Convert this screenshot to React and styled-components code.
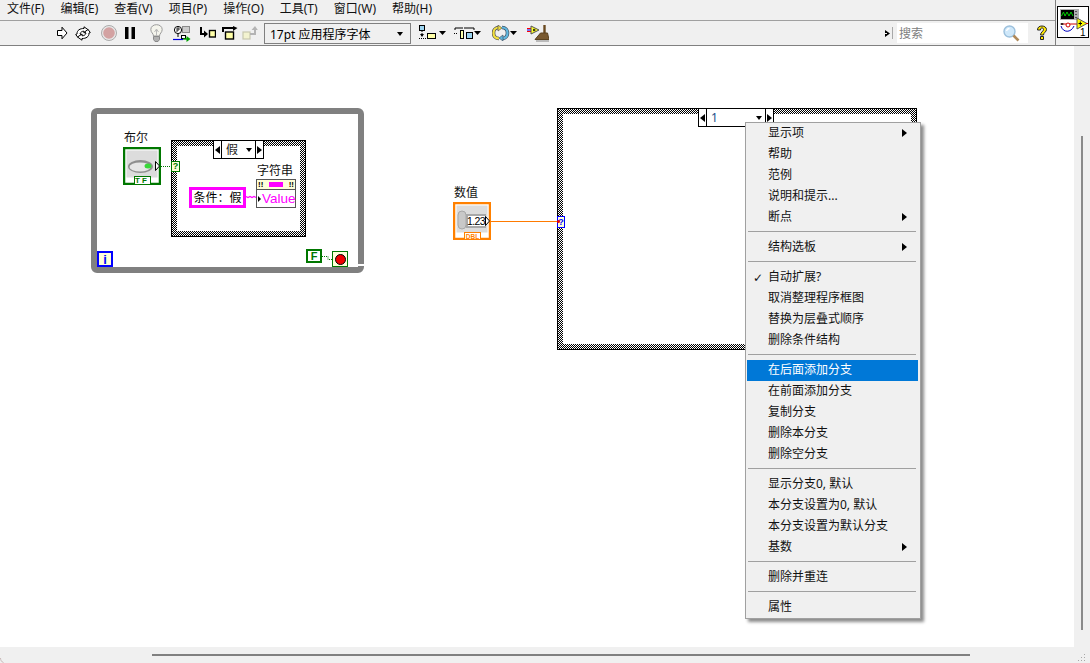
import React from "react";
import styled, { createGlobalStyle, css } from "styled-components";

const FONT = `"Noto Sans", "Noto Sans CJK SC", sans-serif`;

const Global = createGlobalStyle`
  html, body { margin: 0; padding: 0; background: #f0f0f0; }
  body { font-family: ${FONT}; font-size: 12px; color: #000; }
`;

/* ---------- window frame ---------- */
const Page = styled.div`
  position: relative; width: 1090px; height: 663px; display: flex; flex-direction: column; overflow: hidden; background: #f0f0f0;
`;
const TopBar = styled.header`
  display: flex; height: 46px; box-sizing: border-box; border-bottom: 1px solid #808080; flex: none;
`;
const TopLeft = styled.div`
  flex: 1; display: flex; flex-direction: column; min-width: 0;
`;
const MenuBar = styled.nav`
  height: 21px; box-sizing: border-box; border-bottom: 1px solid #a0a0a0; display: flex; align-items: center; line-height: 18px; padding: 0 0 2px; margin-left: -1px;
`;
const MenuTitle = styled.span`
  padding: 0 8px; white-space: nowrap; color: #111;
`;
const Toolbar = styled.div`
  flex: 1; display: flex; align-items: center; padding-left: 56px; padding-right: 7px;
`;
const Tool = styled.span`
  display: flex; flex: none; margin-left: ${p => p.$gap || 0}px;
`;
const FontSelect = styled.div`
  width: 147px; height: 21px; box-sizing: border-box; margin-left: 6px; margin-top: 1px; border: 1px solid #808080; display: flex; align-items: center; padding: 0 7px 0 5px; justify-content: space-between; white-space: nowrap; flex: none;
`;
const DownTriangle = styled.span`
  width: 0; height: 0; border-left: 3.5px solid transparent; border-right: 3.5px solid transparent; border-top: 4px solid #000; flex: none;
`;
const SearchExpand = styled.span`
  margin-left: auto; display: flex; align-items: center; gap: 2px; margin-right: 4px;
`;
const SearchSep = styled.span`
  width: 1px; height: 12px; background: #a8a8a8;
`;
const SearchField = styled.div`
  width: 131px; height: 20px; background: #fff; display: flex; align-items: center; justify-content: space-between; padding: 0 8px 0 2px; box-sizing: border-box; color: #808080; flex: none;
`;
const IconPane = styled.div`
  width: 35px; flex: none; border-left: 1px solid #808080; box-sizing: border-box; padding: 6px 0 0 1px;
`;
const Main = styled.main`
  flex: 1; display: flex; min-height: 0;
`;
const Canvas = styled.div`
  flex: 1; position: relative; background: #fff;
`;
const VGutter = styled.div`
  width: 16px; flex: none; background: #f0f0f0; padding: 90px 0 17px 7px; box-sizing: border-box;
`;
const VThumb = styled.div`
  width: 2px; height: 100%; background: #8a8a8a;
`;
const BottomBar = styled.footer`
  height: 16px; flex: none; display: flex; background: #f0f0f0; padding: 7px 4px 0 152px; box-sizing: border-box; justify-content: space-between; align-items: flex-start;
`;
const HThumb = styled.div`
  width: 818px; height: 2px; background: #808080;
`;
const CornerMark = styled.svg`
  position: absolute; left: 0; bottom: 0; display: block;
`;

/* ---------- diagram nodes (free canvas) ---------- */
const at = css`
  position: absolute; left: ${p => p.$x}px; top: ${p => p.$y - 46}px;
`;
const Label = styled.span`
  ${at}; line-height: 14px; color: #111; white-space: nowrap;
`;
const WhileLoop = styled.div`
  ${at}; width: 273px; height: 165px; box-sizing: border-box; border: 6px solid #808080; border-radius: 6px;
`;
const LoopNotch = styled.div`
  ${at}; width: 7px; height: 2px; background: #fff;
`;
const CaseFrame = styled.div`
  ${at}; width: ${p => p.$w}px; height: ${p => p.$h}px; box-sizing: border-box; border: 1px solid #000; padding: 5px;
  display: flex; background: #fff;
`;
const CheckerFill = styled.svg`
  position: absolute; inset: 0; width: 100%; height: 100%; display: block; shape-rendering: crispEdges;
`;
const CaseBody = styled.div`
  flex: 1; background: #fff; position: relative;
`;
const CaseStructure = ({ x, y, w, h }) => (
  <CaseFrame $x={x} $y={y} $w={w} $h={h}>
    <CheckerFill>
      <defs>
        <pattern id="case-checker" width="2" height="2" patternUnits="userSpaceOnUse">
          <rect width="1" height="1" fill="#000" />
          <rect x="1" y="1" width="1" height="1" fill="#000" />
        </pattern>
      </defs>
      <rect width="100%" height="100%" fill="url(#case-checker)" />
    </CheckerFill>
    <CaseBody />
  </CaseFrame>
);
const Selector = styled.div`
  ${at}; height: 19px; width: ${p => p.$w}px; box-sizing: border-box; border: 1px solid #000; background: #fff; display: flex; align-items: stretch; line-height: 16px;
`;
const SelectorStep = styled.span`
  width: 7px; flex: none; display: flex; align-items: center; justify-content: center;
  ${p => p.$left ? "border-right: 1px solid #000;" : "border-left: 1px solid #000;"}
`;
const StepArrow = styled.span`
  width: 0; height: 0; border-top: 4px solid transparent; border-bottom: 4px solid transparent;
  ${p => p.$left ? "border-right: 5px solid #000;" : "border-left: 5px solid #000;"}
`;
const SelectorValue = styled.span`
  flex: 1; display: flex; align-items: center; justify-content: space-between; padding: 0 3px 0 4px; color: ${p => p.$blue ? "#1c4f8a" : "#222"};
`;
const Terminal = styled.div`
  ${at}; width: ${p => p.$w}px; height: ${p => p.$h}px; box-sizing: border-box; border: ${p => p.$bw || 1}px solid ${p => p.$c}; background: ${p => p.$bg || "#ffffd8"};
  display: flex; align-items: center; justify-content: center; color: ${p => p.$c}; font: bold ${p => p.$fs || 10}px/1 "Liberation Sans", sans-serif;
`;
const StopDot = styled.span`
  width: 11px; height: 11px; border-radius: 50%; background: #f00000; border: 1px solid #000; box-sizing: border-box;
`;
const TunnelDot = styled.span`
  ${at}; width: 3px; height: 3px; background: #f00000; border-radius: 50%;
`;
const StringConst = styled.div`
  ${at}; width: 57px; height: 21px; box-sizing: border-box; border: 3px solid #ff00ff; background: #fff; display: flex; align-items: center; justify-content: center; white-space: nowrap; line-height: 15px;
`;
const StringInd = styled.div`
  ${at}; width: 40px; height: 29px; box-sizing: border-box; border: 1px solid #555; background: #fff; display: flex; flex-direction: column;
`;
const StrHead = styled.div`
  height: 9px; background: #ffffd8; border-bottom: 1px solid #555; display: flex; align-items: center; justify-content: space-between; padding: 0 1px; font: bold 8px/8px "Liberation Sans", sans-serif; color: #000;
`;
const StrBar = styled.span`
  width: 14px; height: 5px; background: #ff00ff;
`;
const StrValue = styled.div`
  flex: 1; display: flex; align-items: center; gap: 1px; padding-left: 1px; color: #ff00ff; font: 13.5px/17px "Liberation Sans", sans-serif;
`;
const InTriangle = styled.span`
  width: 0; height: 0; border-top: 3.5px solid transparent; border-bottom: 3.5px solid transparent; border-left: 3px solid #000; flex: none;
`;
const Wire = styled.svg`
  ${at}; overflow: visible;
`;
const NodeIcon = styled.svg`
  ${at}; display: block;
`;

/* ---------- context menu ---------- */
const ContextMenu = styled.div`
  ${at}; width: 176px; box-sizing: border-box; background: #f0f0f0; border: 1px solid #a0a0a0; padding: 0 2px 0 1px; box-shadow: 3px 3px 3px rgba(0,0,0,.45); z-index: 5;
`;
const Item = styled.div`
  height: 21px; box-sizing: border-box; line-height: 19px; display: flex; align-items: center; position: relative; padding: 0 11px 2px 21px; white-space: nowrap;
  background: ${p => p.$active ? "#0078d7" : "transparent"}; color: ${p => p.$active ? "#fff" : "#111"};
`;
const Check = styled.span`
  position: absolute; left: 6px; top: 1px; font: 12px/20px "DejaVu Sans", sans-serif;
`;
const SubArrow = styled.span`
  margin-left: auto; width: 0; height: 0; border-top: 4.5px solid transparent; border-bottom: 4.5px solid transparent; border-left: 5px solid #000;
`;
const Sep = styled.div`
  height: 1px; margin: 3px 2px 5px 1px; background: #a0a0a0;
`;

const menu = [
  { t: "显示项", sub: 1 }, { t: "帮助" }, { t: "范例" }, { t: "说明和提示..." }, { t: "断点", sub: 1 }, "-",
  { t: "结构选板", sub: 1 }, "-",
  { t: "自动扩展?", check: 1 }, { t: "取消整理程序框图" }, { t: "替换为层叠式顺序" }, { t: "删除条件结构" }, "-",
  { t: "在后面添加分支", active: 1 }, { t: "在前面添加分支" }, { t: "复制分支" }, { t: "删除本分支" }, { t: "删除空分支" }, "-",
  { t: "显示分支0, 默认" }, { t: "本分支设置为0, 默认" }, { t: "本分支设置为默认分支" }, { t: "基数", sub: 1 }, "-",
  { t: "删除并重连" }, "-",
  { t: "属性" },
];
const titles = ["文件(F)", "编辑(E)", "查看(V)", "项目(P)", "操作(O)", "工具(T)", "窗口(W)", "帮助(H)"];

/* ---------- toolbar icons ---------- */
const RunIcon = () => (
  <svg width="12" height="14" viewBox="0 0 12 14">
    <path d="M1.5 4.5H6V1.2L11 7 6 12.8V9.5H1.5Z" fill="#fff" stroke="#000" />
  </svg>
);
const RunContIcon = () => (
  <svg width="16" height="15" viewBox="0 0 16 15">
    <path d="M2 8C2 4 5 2.5 9 2.5V.8L13.5 4 9 7V5.2C7 5.2 5.5 6 5 8L6.5 9 3 11.5 .7 8.5Z" fill="#fff" stroke="#000" strokeWidth="1" />
    <path d="M14 7C14 11 11 12.5 7 12.5V14.2L2.5 11 7 8V9.8C9 9.8 10.5 9 11 7L9.5 6 13 3.5 15.3 6.5Z" fill="#fff" stroke="#000" strokeWidth="1" />
  </svg>
);
const StopIcon = () => (
  <svg width="16" height="16" viewBox="0 0 16 16">
    <circle cx="8" cy="8" r="7.5" fill="#e8e8e8" stroke="#aaa" />
    <circle cx="8" cy="8" r="5.8" fill="#d3a2a2" />
  </svg>
);
const PauseIcon = () => (
  <svg width="10" height="12" viewBox="0 0 10 12">
    <path d="M0 0H3.5V12H0ZM6.5 0H10V12H6.5Z" fill="#000" />
  </svg>
);
const BulbIcon = () => (
  <svg width="13" height="18" viewBox="0 0 13 18">
    <path d="M3.5 12C3.5 9.5 .8 8.5 .8 5.5 .8 2.5 3.5.7 6.5.7S12.2 2.5 12.2 5.5C12.2 8.5 9.5 9.5 9.5 12Z" fill="#f4f4ec" stroke="#9a9a9a" />
    <path d="M4.5 8 6.5 5 8.5 8M6.5 5V12" fill="none" stroke="#bbb" />
    <path d="M3.5 12.5H9.5V15.5L8 17.5H5L3.5 15.5Z" fill="#b0b0b0" stroke="#8a8a8a" />
  </svg>
);
const ProbeIcon = () => (
  <svg width="18" height="17" viewBox="0 0 18 17">
    <circle cx="5" cy="5" r="3.6" fill="#fff" stroke="#000" />
    <path d="M4 3V7M4 3H6V5H4" fill="none" stroke="#000" strokeWidth=".8" />
    <path d="M5 9V12" stroke="#000" />
    <rect x="9.5" y="1.5" width="7" height="6" fill="#ccc" stroke="#8a8a8a" />
    <rect x="8.5" y="10.5" width="4" height="3" fill="#fff" stroke="#000" />
    <path d="M0 14.5H10" stroke="#0000e0" strokeWidth="1.2" />
    <path d="M10 14H14" stroke="#00a000" strokeWidth="1.4" />
    <path d="M13.5 11V17L17.5 14Z" fill="#00a000" />
  </svg>
);
const StepIntoIcon = () => (
  <svg width="16" height="13" viewBox="0 0 16 13">
    <path d="M1 0V7H5" fill="none" stroke="#000" strokeWidth="2" />
    <path d="M4 3.5V10.5L8 7Z" fill="#000" />
    <rect x="9.5" y="3.5" width="6" height="6.5" fill="#ffffa8" stroke="#000" strokeWidth="1.4" />
  </svg>
);
const StepOverIcon = () => (
  <svg width="16" height="14" viewBox="0 0 16 14">
    <path d="M1 6V2H11" fill="none" stroke="#000" strokeWidth="2" />
    <path d="M11 0V5L15.5 2Z" fill="#000" />
    <rect x="3.5" y="6" width="8" height="7" fill="#ffffa8" stroke="#000" strokeWidth="1.4" />
  </svg>
);
const StepOutIcon = () => (
  <svg width="16" height="14" viewBox="0 0 16 14">
    <rect x="1" y="6" width="7" height="7" fill="#f3f3d0" stroke="#c8c8b0" strokeWidth="1.2" />
    <path d="M8 8H13V3" fill="none" stroke="#b4b4b4" strokeWidth="2" />
    <path d="M9.5 4H15.8L13 0Z" fill="#b4b4b4" />
  </svg>
);
const AlignIcon = () => (
  <svg width="27" height="16" viewBox="0 0 27 16">
    <rect x=".5" y=".5" width="5" height="5" fill="#9cd4f0" stroke="#000" />
    <path d="M3 6V12" stroke="#000" strokeDasharray="1 1" />
    <path d="M1 9 3 12 5 9Z" fill="#000" />
    <path d="M0 13.5H17" stroke="#000" strokeDasharray="1 1" />
    <rect x="8.5" y="8.5" width="8" height="5" fill="#ffffa8" stroke="#000" />
    <path d="M20 6H27L23.500 10Z" fill="#000" />
  </svg>
);
const DistributeIcon = () => (
  <svg width="27" height="14" viewBox="0 0 27 14">
    <path d="M1 4V2H9M10 2H20V4" fill="none" stroke="#000" />
    <rect x="6.500" y="4.500" width="3" height="8" fill="#ffffa8" stroke="#000" />
    <rect x="12.500" y="6.500" width="6" height="6" fill="#9cd4f0" stroke="#000" />
    <path d="M0 7.500H4" stroke="#000" strokeDasharray="1 1" />
    <path d="M20 5H27L23.500 9Z" fill="#000" />
  </svg>
);
const ReorderIcon = () => (
  <svg width="25" height="16" viewBox="0 0 25 16">
    <path d="M7 2.500C3.500 2.500 1.500 5 1.500 8S3.500 13.500 7 13.500" fill="none" stroke="#555" strokeWidth="3.600" />
    <path d="M7 2.500C3.500 2.500 1.500 5 1.500 8S3.500 13.500 7 13.500" fill="none" stroke="#f2e040" strokeWidth="2.200" />
    <path d="M6 0 10 3 6 6Z" fill="#f2e040" stroke="#555" strokeWidth=".7" />
    <path d="M10 13.500C13.500 13.500 15.500 11 15.500 8S13.500 2.500 10 2.500" fill="none" stroke="#456" strokeWidth="3.600" />
    <path d="M10 13.500C13.500 13.500 15.500 11 15.500 8S13.500 2.500 10 2.500" fill="none" stroke="#60b8e0" strokeWidth="2.200" />
    <path d="M11 10 7 13 11 16Z" fill="#60b8e0" stroke="#456" strokeWidth=".7" />
    <path d="M18 6H25L21.500 10Z" fill="#000" />
  </svg>
);
const CleanupIcon = () => (
  <svg width="22" height="17" viewBox="0 0 22 17">
    <path d="M0 3.500H4M0 6.500H4" stroke="#ff0000" />
    <path d="M0 5H4" stroke="#0000ff" />
    <path d="M4 1V9L12 5Z" fill="#ffff30" stroke="#555" />
    <path d="M6 5H8.500M7 3.800V6.200" stroke="#000" />
    <path d="M17.500 0V8" stroke="#6a4a20" strokeWidth="2.400" />
    <path d="M13.500 8H20.500L22 14.500H8Z" fill="#7a5a30" stroke="#5a4220" />
    <path d="M9 16H22" stroke="#aaa" strokeWidth="1.500" />
  </svg>
);
const SearchExpandIcon = () => (
  <svg width="5" height="7" viewBox="0 0 5 7"><path d="M0 0V7L5 3.500Z M0 3H2V4H0Z" fill="#000" /></svg>
);
const MagnifierIcon = () => (
  <svg width="17" height="17" viewBox="0 0 17 17">
    <circle cx="6.500" cy="6.500" r="5.500" fill="#cfe8fa" stroke="#9cc0dc" strokeWidth="1.400" />
    <path d="M3.500 6C4 4.500 5 3.500 6.500 3.500" fill="none" stroke="#fff" strokeWidth="1.300" />
    <path d="M10.500 10.500 15.500 15.500" stroke="#b08a5a" strokeWidth="2.600" />
  </svg>
);
const HelpIcon = () => (
  <svg width="12" height="16" viewBox="0 0 12 16">
    <path d="M1.500 5C1.500 2 3.500 1 6 1S10.500 2.500 10.500 4.500C10.500 7 7.500 7.500 7.500 10H4.500C4.500 7 7.500 6.500 7.500 4.500 7.500 3.500 7 3 6 3S4.500 3.500 4.500 5ZM4.500 11.500H7.500V14.500H4.500Z" fill="#ffe800" stroke="#222" strokeWidth="1" />
  </svg>
);
const VIIcon = () => (
  <svg width="32" height="32" viewBox="0 0 32 32" style={{ display: "block" }}>
    <rect x=".5" y=".5" width="31" height="31" fill="#fff" stroke="#000" />
    <rect x="3" y="3" width="19" height="11" fill="#b0b0b0" />
    <rect x="4" y="4" width="13" height="9" fill="#000" />
    <path d="M4.500 10 6.500 6 8 10 10 6 12 10 14 6 16 10" fill="none" stroke="#00d000" />
    <path d="M19 5V6M19 8V9M19 11V12" stroke="#333" strokeWidth="1.500" />
    <path d="M4 18H24" stroke="#d00000" />
    <path d="M5 17V19M3.500 18H6.500" stroke="#000" />
    <path d="M4 20C6 27 14 27 17 20" fill="none" stroke="#0000c0" />
    <circle cx="11" cy="19" r="2" fill="#fff" stroke="#d00000" />
    <path d="M20 12V23L30 17.500Z" fill="#ffff00" stroke="#555" />
    <path d="M21.500 17.500H25M23.300 15.500V19.500" stroke="#000" />
    <path d="M29 17.500H31" stroke="#d00000" />
    <text x="23" y="30" fontFamily="Liberation Sans, sans-serif" fontSize="10" fill="#000">1</text>
  </svg>
);
const Grip = () => (
  <svg width="8" height="9" viewBox="0 0 8 9">
    <path d="M6 0H7V1H6ZM6 3H7V4H6ZM3 3H4V4H3ZM6 6H7V7H6ZM3 6H4V7H3ZM0 6H1V7H0Z" fill="#a8a8a8" />
  </svg>
);

/* ---------- node drawings ---------- */
const BooleanControl = ({ x, y }) => (
  <NodeIcon $x={x} $y={y} width="38" height="38" viewBox="0 0 38 38">
    <rect x="1" y="1" width="36" height="36" fill="#fff" stroke="#007700" strokeWidth="2.500" />
    <rect x="3.500" y="3.500" width="31" height="27" fill="#dcdcdc" />
    <ellipse cx="17.500" cy="19.500" rx="12.500" ry="6.500" fill="#8e8e8e" />
    <ellipse cx="17" cy="20" rx="10.500" ry="4.500" fill="#e6e6e6" />
    <ellipse cx="25" cy="19" rx="3.500" ry="2.500" fill="#38d838" />
    <rect x="11.500" y="29.500" width="16" height="8" fill="#fff" stroke="#007700" />
    <text x="19" y="36" textAnchor="middle" fontFamily="Liberation Sans, sans-serif" fontWeight="bold" fontSize="8" letterSpacing="2" fill="#007700">TF</text>
    <path d="M32.500 14.500V23.500L36.500 19Z" fill="#fff" stroke="#000" />
  </NodeIcon>
);
const NumericControl = ({ x, y }) => (
  <NodeIcon $x={x} $y={y} width="38" height="38" viewBox="0 0 38 38">
    <rect x="1" y="1" width="36" height="36" fill="#fff" stroke="#ff8000" strokeWidth="2.500" />
    <rect x="3.500" y="3.500" width="31" height="27" fill="#dcdcdc" />
    <rect x="5" y="9" width="8" height="18" rx="4" fill="#c8c8c8" stroke="#a8a8a8" />
    <path d="M13 13H15M13 22H15" stroke="#888" />
    <rect x="13" y="12" width="20" height="14" fill="#a8a8a8" />
    <rect x="15" y="14" width="17" height="10" fill="#fff" />
    <text x="23" y="23" textAnchor="middle" fontFamily="Liberation Sans, sans-serif" fontSize="10.500" letterSpacing="-.6" fill="#000">1.23</text>
    <path d="M32.500 14.500V23.500L36.500 19Z" fill="#fff" stroke="#000" />
    <rect x="11.500" y="30.500" width="16" height="7" fill="#fff" stroke="#ff8000" />
    <text x="19.500" y="36.500" textAnchor="middle" fontFamily="Liberation Sans, sans-serif" fontWeight="bold" fontSize="6.500" fill="#ff8000">DBL</text>
  </NodeIcon>
);

export default function App() {
  return (
    <Page>
      <Global />
      <TopBar>
        <TopLeft>
          <MenuBar>
            {titles.map(t => <MenuTitle key={t}>{t}</MenuTitle>)}
          </MenuBar>
          <Toolbar>
            <Tool><RunIcon /></Tool>
            <Tool $gap={7}><RunContIcon /></Tool>
            <Tool $gap={10}><StopIcon /></Tool>
            <Tool $gap={8}><PauseIcon /></Tool>
            <Tool $gap={15}><BulbIcon /></Tool>
            <Tool $gap={10}><ProbeIcon /></Tool>
            <Tool $gap={9}><StepIntoIcon /></Tool>
            <Tool $gap={6}><StepOverIcon /></Tool>
            <Tool $gap={4}><StepOutIcon /></Tool>
            <FontSelect><span>17pt 应用程序字体</span><DownTriangle /></FontSelect>
            <Tool $gap={8}><AlignIcon /></Tool>
            <Tool $gap={8}><DistributeIcon /></Tool>
            <Tool $gap={11}><ReorderIcon /></Tool>
            <Tool $gap={10}><CleanupIcon /></Tool>
            <SearchExpand><SearchExpandIcon /><SearchSep /></SearchExpand>
            <SearchField><span>搜索</span><MagnifierIcon /></SearchField>
            <Tool $gap={8}><HelpIcon /></Tool>
          </Toolbar>
        </TopLeft>
        <IconPane><VIIcon /></IconPane>
      </TopBar>
      <Main>
        <Canvas>
          {/* left: while loop */}
          <WhileLoop $x={91} $y={108} />
          <LoopNotch $x={358} $y={264} />
          <Label $x={124} $y={131}>布尔</Label>
          <CaseStructure x={171} y={140} w={135} h={97} />
          <Selector $x={213} $y={140} $w={51}>
            <SelectorStep $left><StepArrow $left /></SelectorStep>
            <SelectorValue><span>假</span><DownTriangle /></SelectorValue>
            <SelectorStep><StepArrow /></SelectorStep>
          </Selector>
          <BooleanControl x={123} y={147} />
          <Wire $x={161} $y={166} width="10" height="1" viewBox="0 0 10 1">
            <path d="M0 .5H10" stroke="#007700" strokeDasharray="1 1" />
          </Wire>
          <Terminal $x={171} $y={161} $w={9} $h={11} $c="#007700" $fs={9}>?</Terminal>
          <Label $x={257} $y={164}>字符串</Label>
          <StringConst $x={189} $y={187}>条件：假</StringConst>
          <Wire $x={246} $y={195} width="10" height="4" viewBox="0 0 10 4">
            <path d="M0 1.500 2 2.500 4 1.500 6 2.500 8 1.500 10 2.500" fill="none" stroke="#ff00ff" strokeWidth="1.200" />
          </Wire>
          <StringInd $x={256} $y={179}>
            <StrHead><span>!!</span><StrBar /><span>!!</span></StrHead>
            <StrValue><InTriangle />Value</StrValue>
          </StringInd>
          <Terminal $x={97} $y={251} $w={16} $h={16} $c="#0000ff" $bw={2} $fs={13}>i</Terminal>
          <Terminal $x={306} $y={249} $w={16} $h={14} $c="#007700" $bw={2} $bg="#fff" $fs={11}>F</Terminal>
          <Wire $x={322} $y={256} width="10" height="4" viewBox="0 0 10 4">
            <path d="M0 .5H6V3.500H10" fill="none" stroke="#007700" strokeDasharray="1 1" />
          </Wire>
          <Terminal $x={332} $y={251} $w={16} $h={16} $c="#007700" $bw={1}><StopDot /></Terminal>

          {/* right: numeric & case */}
          <Label $x={454} $y={186}>数值</Label>
          <NumericControl x={453} y={202} />
          <CaseStructure x={557} y={108} w={360} h={242} />
          <Selector $x={698} $y={108} $w={76}>
            <SelectorStep $left><StepArrow $left /></SelectorStep>
            <SelectorValue $blue><span>1</span><DownTriangle /></SelectorValue>
            <SelectorStep><StepArrow /></SelectorStep>
          </Selector>
          <Wire $x={491} $y={221} width="67" height="1" viewBox="0 0 67 1">
            <path d="M0 .5H67" stroke="#ff7a00" />
          </Wire>
          <Terminal $x={557} $y={216} $w={8} $h={12} $c="#0000ff" $fs={9}>?</Terminal>
          <TunnelDot $x={557} $y={220} />

          <ContextMenu $x={745} $y={122}>
            {menu.map((m, i) => m === "-" ? <Sep key={i} /> : (
              <Item key={i} $active={m.active}>
                {m.check && <Check>✓</Check>}
                {m.t}
                {m.sub && <SubArrow />}
              </Item>
            ))}
          </ContextMenu>
        </Canvas>
        <VGutter><VThumb /></VGutter>
      </Main>
      <BottomBar><HThumb /><Grip /></BottomBar>
      <CornerMark width="4" height="5" viewBox="0 0 4 5">
        <path d="M.5 0C.5 2 1.500 4 3.500 4.500" fill="none" stroke="#c8b8b8" />
      </CornerMark>
    </Page>
  );
}
